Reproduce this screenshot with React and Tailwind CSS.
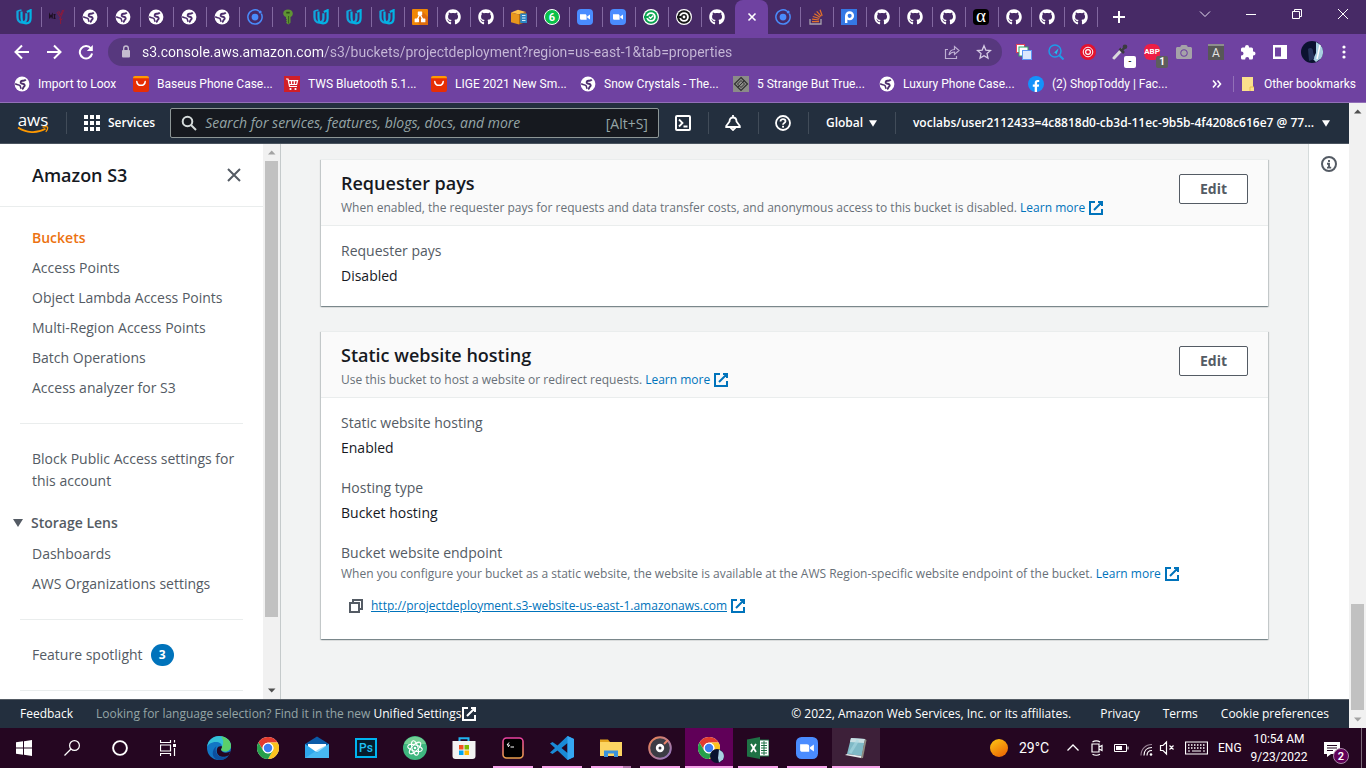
import React from "react";
import { FaGithub, FaFacebookF, FaCamera } from "react-icons/fa";

/* ---------- favicons ---------- */

const Svg = ({ s = 16, vb = "0 0 16 16", children, className = "" }) => (
  <svg width={s} height={s} viewBox={vb} fill="none" aria-hidden="true" className={"shrink-0 " + className}>
    {children}
  </svg>
);

const Udacity = () => (
  <Svg>
    <path d="M1.500 1.800v6.400c0 3 1.900 5.300 4.600 5.300 2.600 0 4.300-1.600 4.300-4.500V4.200" stroke="#12a5dc" strokeWidth="2.300" />
    <path d="M5.500 2.400v6.200c0 3.400 1.700 5.800 4.600 5.800 2.900 0 4.500-2.300 4.500-5.300V1.200l-3.800 1.700" stroke="#02b3e4" strokeWidth="2.200" />
    <path d="M1.500 2l4-1" stroke="#12a5dc" strokeWidth="1.600" />
  </Svg>
);

const Globe = () => (
  <Svg>
    <circle cx="8" cy="8" r="7.400" fill="#fff" />
    <path d="M11.800 3.600C10.500 5 9.600 4.600 8.300 4.800c-1.800.3-2.200 1.900-.9 2.600 1.200.6 3 .2 3.300 1.700.2 1.200-.9 1.400-1.300 2.300-.3.700-.5 1.300-1.300 1.900" stroke="#4c2d6d" strokeWidth="1.900" />
    <path d="M1.200 7.600c1.500 1.400 3.700.7 4.700 1.900.8 1 .4 1.900 1.300 3.200" stroke="#4c2d6d" strokeWidth="1.500" />
  </Svg>
);

const RedMark = () => (
  <Svg>
    <g stroke="#1d0f22" strokeWidth="1.200">
      <path d="M.6 9.500v-4l1.300 2.200 1.300-2.200v4M4.500 5.600h2M5.500 5.600v3.900M4.500 9.400h2" />
    </g>
    <path d="M8 3l3.500 5.500L15 .8M9.500 2l2.300 4 1.800-5M11.600 8v7M10 9.500l1.800 1.500 1.700-1.300" stroke="#8e1a3a" strokeWidth="1" />
  </Svg>
);

const Ionic = () => (
  <Svg>
    <path d="M12 2.100A7.100 7.100 0 1 0 14.300 4.700" stroke="#4a8bfa" strokeWidth="1.500" />
    <circle cx="8" cy="8.100" r="3.400" fill="#4a8bfa" />
    <circle cx="13.200" cy="3" r="1.500" fill="#4a8bfa" />
  </Svg>
);

const Key = () => (
  <Svg>
    <path d="M8 .5c2.700 0 4.800 1.500 4.800 4 0 1.700-.9 3-2.300 3.600v5.600L8.300 15.500l-2.300-1.800 1-1-1-1.100 1-1-1-.9V8.100C4.600 7.500 3.200 6.200 3.200 4.500c0-2.500 2.100-4 4.800-4z" fill="#5f9434" />
    <path d="M6.300 2.800h3.400v1.700H6.300z" fill="#2b4a19" />
    <path d="M8.600 7v7.500" stroke="#37611b" strokeWidth="1" />
  </Svg>
);

const Draw = () => (
  <Svg>
    <rect width="16" height="16" rx="1" fill="#f08705" />
    <path d="M11 3l5 5v8H8l-4-4z" fill="#df6c0c" />
    <path d="M8 5L5 11M8 5l3 6" stroke="#fff" strokeWidth="1.400" />
    <rect x="5.800" y="2.600" width="4.400" height="3.600" rx=".5" fill="#fff" />
    <rect x="2.600" y="9.600" width="4.400" height="3.600" rx=".5" fill="#fff" />
    <rect x="9" y="9.600" width="4.400" height="3.600" rx=".5" fill="#fff" />
  </Svg>
);

const Github = () => <FaGithub className="size-4 shrink-0 text-white" aria-hidden="true" />;

const Box = () => (
  <Svg>
    <path d="M0 3.500L7 .8l8 2.200-7 2.500z" fill="#ffc14a" />
    <path d="M0 3.500l8 2v10l-8-2.200z" fill="#e8971d" />
    <path d="M8 5.500l7-2.500v10l-7 2.500z" fill="#b86f10" />
    <rect x="9.200" y="4.500" width="6.800" height="9.500" fill="#2d84c4" />
    <path d="M11 6.500h3.500M11 9h3.500M11 11.500h3.500" stroke="#d9edfa" strokeWidth="1.200" />
  </Svg>
);

const WhatsApp = () => (
  <span className="flex size-4 shrink-0 items-center justify-center rounded-full border border-white bg-[#0ac14a] text-[11px] leading-none font-bold text-white">
    6
  </span>
);

const Zoom = ({ s = 16 }) => (
  <Svg s={s}>
    <rect width="16" height="16" rx="4" fill="#4a8cff" />
    <path d="M3 5.200h5c1 0 1.600.600 1.600 1.600v4h-5c-1 0-1.600-.6-1.600-1.600z" fill="#fff" />
    <path d="M10.200 7.400l2.800-2v5.200l-2.800-2z" fill="#fff" />
  </Svg>
);

const Circle = ({ c, check }) => (
  <Svg>
    <circle cx="8" cy="8" r="8" fill="#fff" />
    <circle cx="8" cy="8" r="6.800" fill={c} />
    <circle cx="8" cy="8" r="3.900" stroke="#fff" strokeWidth="1.900" />
    <path d="M1 8h4.500" stroke={c} strokeWidth="2.200" />
    {check ? <path d="M6 7.800l1.500 1.500L10.300 6.600" stroke="#fff" strokeWidth="1.400" /> : <circle cx="8" cy="8" r="1.400" fill="#fff" />}
  </Svg>
);

const PTab = () => (
  <Svg>
    <rect width="16" height="16" fill="#3578e5" />
    <circle cx="8.600" cy="6.800" r="3.300" stroke="#fff" strokeWidth="2.400" />
    <path d="M5.200 6.500v7.500" stroke="#fff" strokeWidth="2.400" />
  </Svg>
);

const Stack = () => (
  <Svg>
    <path d="M2 10v5h11v-5" stroke="#a9a3ad" strokeWidth="1.300" />
    <path d="M4 12.700h7M4.100 10.200l6.900.8M4.800 7.500l6.600 2M6.300 4.700l5.900 3.600M8.700 2.300l4.500 5M12 .8l2.200 6" stroke="#e3712b" strokeWidth="1.200" />
  </Svg>
);

const Alpha = () => (
  <span className="flex size-4 shrink-0 items-center justify-center rounded-sm bg-black pb-1 font-['Liberation_Serif',serif] text-[19px] leading-none text-white">
    α
  </span>
);

const Ali = () => (
  <Svg>
    <path d="M0 2a2 2 0 0 1 2-2h12a2 2 0 0 1 2 2v3H0z" fill="#ff9a00" />
    <path d="M0 2.200h16V14a2 2 0 0 1-2 2H2a2 2 0 0 1-2-2z" fill="#e62e04" />
    <path d="M3.800 5.600c.5 5 7.900 5 8.400 0" stroke="#fff" strokeWidth="1.500" strokeLinecap="round" />
  </Svg>
);

const Cart = () => (
  <Svg>
    <rect width="16" height="16" fill="#d11f27" />
    <path d="M2 3h2l1.500 7.500H13M4.600 4.700h9l-1 3.800H5.400M7.500 4.700v3.800M10.300 4.700v3.800" stroke="#fff" strokeWidth="1.200" />
    <circle cx="6.500" cy="13" r="1.100" fill="#fff" />
    <circle cx="11.500" cy="13" r="1.100" fill="#fff" />
  </Svg>
);

const Diamond = () => (
  <Svg>
    <rect width="16" height="16" fill="#8b8b88" />
    <path d="M8 1.500L14.500 8 8 14.500 1.500 8z" stroke="#303030" strokeWidth="1.200" />
    <path d="M8 4.500L11.500 8 8 11.500 4.500 8zM4.500 11.500l7-7" stroke="#303030" />
  </Svg>
);

const Facebook = () => (
  <span className="flex size-4 shrink-0 items-end justify-center rounded-full bg-[#1492fb] text-white">
    <FaFacebookF className="h-3 w-3" aria-hidden="true" />
  </span>
);

/* ---------- shared bits ---------- */

const External = () => (
  <svg viewBox="0 0 16 16" fill="none" stroke="currentColor" strokeWidth="2" aria-hidden="true" className="inline-block size-4 shrink-0 align-middle">
    <path d="M10 2h4v4M6 10l8-8M14 9.048V14H2V2h5" />
  </svg>
);

const Caret = ({ className = "" }) => (
  <svg viewBox="0 0 10 8" fill="currentColor" aria-hidden="true" className={"shrink-0 " + className}>
    <path d="M0 0h10L5 8z" />
  </svg>
);

function ScrollTrack({ up, down, thumb, lead }) {
  return (
    <div className="flex w-[17px] shrink-0 flex-col items-center bg-[#f1f1f1]">
      <Svg s={17} vb="0 0 17 17"><path d="M5 10.500h7.500L8.700 6.500z" fill={up} /></Svg>
      <div className={lead} />
      <div className={"w-[13px] bg-[#c1c1c1] " + thumb} />
      <div className="grow" />
      <Svg s={17} vb="0 0 17 17"><path d="M5 6.500h7.500L8.700 10.500z" fill={down} /></Svg>
    </div>
  );
}

/* ---------- browser chrome ---------- */

const tabsLeft = [
  ["Udacity", <Udacity />], ["MZ", <RedMark />], ["Site 1", <Globe />], ["Site 2", <Globe />], ["Site 3", <Globe />],
  ["Site 4", <Globe />], ["Site 5", <Globe />], ["Ionic", <Ionic />], ["Keys", <Key />], ["Udacity 2", <Udacity />],
  ["Udacity 3", <Udacity />], ["Udacity 4", <Udacity />], ["Diagrams", <Draw />], ["GitHub 1", <Github />],
  ["GitHub 2", <Github />], ["Packages", <Box />], ["WhatsApp", <WhatsApp />], ["Zoom 1", <Zoom />], ["Zoom 2", <Zoom />],
  ["CircleCI passed", <Circle c="#0aa350" check />], ["CircleCI", <Circle c="#161616" />], ["GitHub 3", <Github />],
];
const tabsRight = [
  ["Ionic 2", <Ionic />], ["Stack Overflow", <Stack />], ["P", <PTab />], ["GitHub 4", <Github />], ["GitHub 5", <Github />],
  ["GitHub 6", <Github />], ["Alpha", <Alpha />], ["GitHub 7", <Github />], ["GitHub 8", <Github />], ["GitHub 9", <Github />],
];

const Tab = ({ label, icon, bare }) => (
  <button aria-label={label} className="flex h-[34px] w-[33px] shrink-0 items-center pl-[7px]">
    {icon}
    {!bare && <span className="ml-auto h-5 w-px bg-[#8268a0]" />}
  </button>
);

function TabStrip() {
  const win = "flex h-7 w-[46px] items-center justify-center";
  return (
    <div className="flex h-[34px] shrink-0 items-center bg-[#472a66] pl-[9px]">
      {tabsLeft.map(([l, i], n) => <Tab key={l} label={l} icon={i} bare={n === tabsLeft.length - 1} />)}
      <button aria-label="Close tab" className="flex h-[34px] w-[33px] shrink-0 items-center justify-center rounded-t-lg bg-[#6f42a1]">
        <Svg><path d="M4.500 4.500l7 7M11.500 4.500l-7 7" stroke="#fff" strokeWidth="1.600" /></Svg>
      </button>
      {tabsRight.map(([l, i]) => <Tab key={l} label={l} icon={i} />)}
      <button aria-label="New tab" className="ml-[7px] flex size-7 items-center justify-center">
        <Svg><path d="M8 2v12M2 8h12" stroke="#fff" strokeWidth="2" /></Svg>
      </button>
      <div className="ml-auto flex self-start">
        <button aria-label="Search tabs" className={win}><Svg><path d="M3 5.500l5 5 5-5" stroke="#e6dff0" /></Svg></button>
        <button aria-label="Minimize" className={win}><Svg><path d="M3 8.500h10" stroke="#fff" /></Svg></button>
        <button aria-label="Restore" className={win}>
          <Svg><path d="M3.500 5.500h7v7h-7zM5.500 5.500v-2h7v7h-2" stroke="#fff" /></Svg>
        </button>
        <button aria-label="Close" className={win}><Svg><path d="M3 3l10 10M13 3L3 13" stroke="#fff" /></Svg></button>
      </div>
    </div>
  );
}

function AddressBar() {
  const b = "flex size-8 shrink-0 items-center justify-center text-white";
  return (
    <div className="flex h-9 shrink-0 items-center bg-[#6f42a1] px-[6px]">
      <button aria-label="Back" className={b}><Svg><path d="M15 8H2M8 1.500L1.500 8 8 14.500" stroke="#fff" strokeWidth="2" /></Svg></button>
      <button aria-label="Forward" className={b}><Svg><path d="M1 8h13M8 1.500L14.500 8 8 14.500" stroke="#fff" strokeWidth="2" /></Svg></button>
      <button aria-label="Reload" className={b}>
        <Svg><path d="M13 4.500A6.200 6.200 0 1 0 14.100 9.500" stroke="#fff" strokeWidth="2" /><path d="M14.800 1v6H8.800z" fill="#fff" /></Svg>
      </button>
      <div className="mx-[6px] flex h-7 min-w-0 grow items-center rounded-full bg-[#57387e] pr-[10px] pl-[10px]">
        <Svg><rect x="4" y="6" width="8" height="7.500" rx="1" fill="#c4bccf" /><path d="M5.700 6.500V4.300a2.300 2.300 0 0 1 4.600 0v2.200" stroke="#c4bccf" strokeWidth="1.400" /></Svg>
        <input
          aria-label="Address"
          defaultValue="s3.console.aws.amazon.com/s3/buckets/projectdeployment?region=us-east-1&tab=properties"
          className="ml-2 min-w-0 grow bg-[linear-gradient(90deg,#ffffff_182px,#c6b8d8_182px)] bg-clip-text text-[14px] leading-5 text-transparent outline-none"
        />
        <button aria-label="Share" className="ml-2">
          <Svg><path d="M4 5.500H1.500v9h11V12M5 11c.5-4 2.500-5.500 5.500-5.500V2.500L15 6.500l-4.500 4V8C8 8 6.500 8.800 5 11z" stroke="#bdaed2" strokeWidth="1.200" /></Svg>
        </button>
        <button aria-label="Bookmark this page" className="ml-4">
          <Svg><path d="M8 1.800l1.800 4.300 4.700.4-3.500 3.100 1 4.500L8 11.700l-4 2.400 1-4.500-3.500-3.100 4.700-.4z" stroke="#d6cbe4" strokeWidth="1.300" /></Svg>
        </button>
      </div>
      <button aria-label="Tab groups" className={b}>
        <Svg>
          <rect x=".5" y=".5" width="8" height="8" fill="#fff" stroke="#e2435c" />
          <rect x="3" y="3" width="9" height="9" fill="#fff" stroke="#2fa866" />
          <rect x="6.500" y="6.500" width="9" height="9" fill="#dce8fd" stroke="#5f98f4" />
        </Svg>
      </button>
      <button aria-label="Search inspector" className={b}>
        <Svg><circle cx="7" cy="7" r="6" stroke="#1e9be8" strokeWidth="1.500" /><path d="M11.500 11.500l4 4" stroke="#1e9be8" strokeWidth="2" /><path d="M4 10.500l6.500-6-2 6-1.800-2z" fill="#1ec3f0" /></Svg>
      </button>
      <button aria-label="Target" className={b}>
        <Svg><circle cx="8" cy="8" r="8" fill="#e4122d" /><circle cx="8" cy="8" r="4.800" stroke="#fff" /><circle cx="8" cy="8" r="2.400" stroke="#fff" strokeWidth="1.200" /></Svg>
      </button>
      <button aria-label="Color picker" className={b + " relative"}>
        <Svg>
          <path d="M2 14l7.500-8" stroke="#d9d9dc" strokeWidth="3" strokeLinecap="round" />
          <path d="M7.500 4.500l4.500 4.500M10 6.500l3-3.500" stroke="#3b3b40" strokeWidth="2.600" />
          <circle cx="13" cy="2.800" r="2.300" fill="#3b3b40" />
        </Svg>
        <span className="absolute right-0 bottom-0 flex size-3 items-center justify-center rounded-xs bg-white text-[10px] leading-none text-black">-</span>
      </button>
      <button aria-label="Ad blocker" className={b + " relative"}>
        <span className="flex size-4 items-center justify-center rounded-md bg-[#ed1e45] text-[8px] font-bold">ABP</span>
        <span className="absolute right-0 bottom-0 flex size-3 items-center justify-center rounded-xs bg-[#5d5d5d] text-[10px] leading-none font-bold">1</span>
      </button>
      <button aria-label="Screenshot" className={b}><FaCamera className="size-4 text-[#a5a3a8]" aria-hidden="true" /></button>
      <button aria-label="Fonts" className={b}>
        <span className="flex size-4 items-center justify-center border-t-2 border-[#8d8d8d] bg-[#575757] text-[12px] leading-none text-[#e3e3e3]">A</span>
      </button>
      <button aria-label="Extensions" className={b}>
        <Svg><path d="M1 5a1.500 1.500 0 0 1 1.500-1.500H5V3a2 2 0 0 1 4 0v.5h2.500A1.500 1.500 0 0 1 13 5v2.500h.5a2 2 0 0 1 0 4H13V14a1.500 1.500 0 0 1-1.500 1.500H9.200V15a2 2 0 0 0-4 0v.5H2.500A1.500 1.500 0 0 1 1 14v-2.500h.5a2 2 0 0 0 0-4H1z" fill="#fff" /></Svg>
      </button>
      <button aria-label="Side panel" className={b}><Svg><path d="M1 1h14v14H1zM3 3.500v9h6v-9z" fill="#fff" fillRule="evenodd" /></Svg></button>
      <button aria-label="Profile" className={b}>
        <Svg s={22} vb="0 0 22 22">
          <circle cx="11" cy="11" r="11" fill="#0b1230" />
          <path d="M15 1l4 2.500a11 11 0 0 1 1 14L15 21l-3-3 3-6z" fill="#a9cfe2" />
          <path d="M19 4l-3 14" stroke="#fff" strokeWidth="1.500" />
          <path d="M7 8c2-2 5-1 5 2s2 4 1 8l-5 2z" fill="#26345c" />
        </Svg>
      </button>
      <button aria-label="Menu" className={b}><Svg><g fill="#fff"><circle cx="8" cy="3" r="1.600" /><circle cx="8" cy="8" r="1.600" /><circle cx="8" cy="13" r="1.600" /></g></Svg></button>
    </div>
  );
}

const bookmarks = [
  ["Import to Loox", <Globe />, "w-[119px]"],
  ["Baseus Phone Case...", <Ali />, "w-[151px]"],
  ["TWS Bluetooth 5.1...", <Cart />, "w-[147px]"],
  ["LIGE 2021 New Sm...", <Ali />, "w-[149px]"],
  ["Snow Crystals - The...", <Globe />, "w-[153px]"],
  ["5 Strange But True...", <Diamond />, "w-[146px]"],
  ["Luxury Phone Case...", <Globe />, "w-[149px]"],
  ["(2) ShopToddy | Fac...", <Facebook />, "w-[153px]"],
];

function BookmarkBar() {
  return (
    <nav aria-label="Bookmarks" className="flex h-[33px] shrink-0 items-center border-b border-[#9270b8] bg-[#6f42a1] pr-[10px] pb-1 pl-[14px] text-[12px] leading-4 whitespace-nowrap text-white">
      {bookmarks.map(([t, i, w]) => (
        <a key={t} href="#bookmark" className={"flex shrink-0 items-center gap-2 " + w}>{i}{t}</a>
      ))}
      <button aria-label="More bookmarks" className="ml-auto">
        <Svg><path d="M4 4.500L7 8l-3 3.500M8.500 4.500l3 3.500-3 3.500" stroke="#fff" strokeWidth="1.600" /></Svg>
      </button>
      <span className="mr-1.5 ml-2 h-4 w-px bg-[#9270b8]" />
      <button className="flex items-center gap-2">
        <Svg><path d="M2 1h11v10h1v4H2z" fill="#fbe08c" /><path d="M10 15v-4h4" stroke="#e8c04e" /></Svg>
        Other bookmarks
      </button>
    </nav>
  );
}

/* ---------- AWS console ---------- */

function ConsoleNav() {
  const sep = <span className="h-[22px] w-px shrink-0 bg-[#414c59]" />;
  const ib = "flex h-10 w-[49px] shrink-0 items-center justify-center text-white";
  return (
    <header className="flex h-[41px] shrink-0 items-center border-b border-[#4a545f] bg-[#232f3e] text-[12px] font-semibold text-white">
      <a href="#home" aria-label="AWS home" className="flex w-[66px] shrink-0 flex-col items-center">
        <span className="text-[17px] leading-[13px] font-medium">aws</span>
        <svg width="32" height="8" viewBox="0 0 32 8" fill="none" aria-hidden="true">
          <path d="M1 1.500c8 5.500 19 6.200 27.500 1.300" stroke="#ff9900" strokeWidth="1.700" />
          <path d="M25.500 1.200c2-.5 4.500-.8 5 0 .4.800-.6 3.200-1.700 4.600" stroke="#ff9900" strokeWidth="1.300" />
        </svg>
      </a>
      {sep}
      <button className="ml-[17px] flex items-center gap-2">
        <Svg>
          <g fill="#fff">
            {[0, 6, 12].map((y) => [0, 6, 12].map((x) => <rect key={x + "-" + y} x={x} y={y} width="4" height="4" />))}
          </g>
        </Svg>
        Services
      </button>
      <div className="ml-[15px] flex h-[30px] min-w-0 grow items-center rounded-xs border border-[#8d9696] bg-[#16191f] px-[10px]">
        <Svg><circle cx="6.500" cy="6.500" r="4.800" stroke="#d5dbdb" strokeWidth="2" /><path d="M10 10l5 5" stroke="#d5dbdb" strokeWidth="2" /></Svg>
        <input
          aria-label="Search"
          placeholder="Search for services, features, blogs, docs, and more"
          className="ml-2 min-w-0 grow text-[14px] leading-5 font-normal outline-none placeholder:text-[#95a5a6] placeholder:italic"
        />
        <span className="text-[14px] font-normal text-[#95a5a6]">[Alt+S]</span>
      </div>
      <button aria-label="CloudShell" className={ib}>
        <Svg><rect x="1" y="1" width="14" height="14" rx="1" stroke="#fff" strokeWidth="2" /><path d="M4 4.500L7.500 8 4 11.500M8.500 11.500h4" stroke="#fff" strokeWidth="1.800" /></Svg>
      </button>
      {sep}
      <button aria-label="Notifications" className={ib}>
        <Svg><path d="M8 0v2.500M8 2.500c2.300 0 3.500 1.700 3.500 4L14.800 11v1H1.200v-1l3.300-4.500c0-2.300 1.200-4 3.500-4z" stroke="#fff" strokeWidth="1.800" /><path d="M5.500 12.500L8 15l2.500-2.500" stroke="#fff" strokeWidth="1.800" /></Svg>
      </button>
      {sep}
      <button aria-label="Help" className={ib}>
        <Svg><circle cx="8" cy="8" r="7" stroke="#fff" strokeWidth="1.800" /><path d="M5.500 6.500c0-3.200 5-3 5-.2 0 1.700-2.500 1.700-2.500 3.400" stroke="#fff" strokeWidth="1.800" /><rect x="7.100" y="10.800" width="1.900" height="1.800" fill="#fff" /></Svg>
      </button>
      {sep}
      <button className="flex h-10 w-[86px] shrink-0 items-center gap-1.5 pl-[17px]">Global <Caret className="h-[7px] w-2" /></button>
      {sep}
      <button className="flex h-10 shrink-0 items-center gap-2 pr-[19px] pl-[17px] whitespace-nowrap">
        voclabs/user2112433=4c8818d0-cb3d-11ec-9b5b-4f4208c616e7 @ 77... <Caret className="h-[7px] w-2" />
      </button>
    </header>
  );
}

const primary = ["Buckets", "Access Points", "Object Lambda Access Points", "Multi-Region Access Points", "Batch Operations", "Access analyzer for S3"];

function SideNav() {
  const rule = <hr className="my-6 mr-5 ml-5 border-t border-[#eaeded]" />;
  return (
    <aside className="flex min-h-0 shrink-0 border-r border-[#c5cacb] bg-white">
      <div className="w-[263px] overflow-hidden text-[14px] leading-[22px] text-[#545b64]">
        <div className="flex h-[63px] items-center justify-between border-b border-[#eaeded] pr-[21px] pl-8">
          <h2 className="text-[18px] font-semibold text-[#16191f]">Amazon S3</h2>
          <button aria-label="Close navigation"><Svg><path d="M2 2l12 12M14 2L2 14" stroke="#545b64" strokeWidth="2" /></Svg></button>
        </div>
        <ul className="mt-5 flex flex-col gap-2 pl-8">
          {primary.map((t, i) => (
            <li key={t}><a href="#nav" className={i === 0 ? "font-semibold text-[#ec7211]" : ""}>{t}</a></li>
          ))}
        </ul>
        {rule}
        <a href="#block" className="block pr-5 pl-8">Block Public Access settings for this account</a>
        <button className="mt-5 flex items-center gap-2 pl-[13px] font-semibold"><Caret className="h-2 w-2.5" />Storage Lens</button>
        <ul className="mt-[9px] flex flex-col gap-2 pl-8">
          <li><a href="#dashboards">Dashboards</a></li>
          <li><a href="#org">AWS Organizations settings</a></li>
        </ul>
        {rule}
        <a href="#spotlight" className="flex items-center gap-2 pl-8">
          Feature spotlight
          <span className="flex h-[22px] w-[23px] items-center justify-center rounded-full bg-[#0073bb] text-[12px] font-bold text-white">3</span>
        </a>
        {rule}
      </div>
      <ScrollTrack up="#a3a3a3" down="#505050" lead="" thumb="h-[456px]" />
    </aside>
  );
}

const Learn = () => (
  <a href="#learn" className="inline-flex items-center gap-[3px] text-[#0073bb]">Learn more <External /></a>
);

function Card({ title, desc, children }) {
  return (
    <section className="border-t border-[#eaeded] bg-white shadow-[0_1px_1px_0_rgba(0,28,36,0.3),1px_1px_1px_0_rgba(0,28,36,0.15),-1px_1px_1px_0_rgba(0,28,36,0.15)]">
      <div className="flex items-start justify-between border-b border-[#eaeded] bg-[#fafafa] px-5 pt-3 pb-2">
        <div>
          <h2 className="text-[18px] leading-[22px] font-semibold text-[#16191f]">{title}</h2>
          <p className="mt-[5px] text-[12px] leading-[18px] text-[#687078]">{desc} <Learn /></p>
        </div>
        <button className="mt-0.5 h-[30px] rounded-xs border border-[#545b64] bg-white px-5 text-[14px] leading-5 font-bold text-[#545b64]">Edit</button>
      </div>
      <dl className="flex flex-col gap-[18px] px-5 pt-[14px] pb-[19px] text-[14px] leading-[22px] text-[#16191f]">{children}</dl>
    </section>
  );
}

const Field = ({ label, children }) => (
  <div>
    <dt className="text-[#545b64]">{label}</dt>
    <dd className="mt-[3px]">{children}</dd>
  </div>
);

function Content() {
  return (
    <main className="flex min-w-0 grow flex-col gap-[25px] overflow-hidden bg-[#f2f3f3] px-10 pt-[15px]">
      <Card title="Requester pays" desc="When enabled, the requester pays for requests and data transfer costs, and anonymous access to this bucket is disabled.">
        <Field label="Requester pays">Disabled</Field>
      </Card>
      <Card title="Static website hosting" desc="Use this bucket to host a website or redirect requests.">
        <Field label="Static website hosting">Enabled</Field>
        <Field label="Hosting type">Bucket hosting</Field>
        <div>
          <dt className="text-[#545b64]">Bucket website endpoint</dt>
          <dd className="mt-px text-[12px] leading-[18px]">
            <p className="text-[#687078]">When you configure your bucket as a static website, the website is available at the AWS Region-specific website endpoint of the bucket. <Learn /></p>
            <div className="mt-2 flex h-[29px] items-center gap-[7px] pl-[7px]">
              <button aria-label="Copy endpoint">
                <Svg><path d="M2 5h9v9H2zM5 5V2h9v9h-3" stroke="#545b64" strokeWidth="2" /></Svg>
              </button>
              <a href="#endpoint" className="flex items-center gap-[3px] text-[#0073bb] underline">
                http://projectdeployment.s3-website-us-east-1.amazonaws.com <External />
              </a>
            </div>
          </dd>
        </div>
      </Card>
    </main>
  );
}

function Footer() {
  return (
    <footer className="flex h-[29px] shrink-0 items-center border-t border-[#545b64] bg-[#232f3e] pr-5 pl-5 text-[12px] leading-4 font-medium whitespace-nowrap text-white">
      <a href="#feedback">Feedback</a>
      <p className="ml-[23px] font-normal text-[#95a5a6]">
        Looking for language selection? Find it in the new{" "}
        <a href="#settings" className="inline-flex items-center font-medium text-white">Unified Settings<External /></a>
      </p>
      <span className="ml-auto">© 2022, Amazon Web Services, Inc. or its affiliates.</span>
      <a href="#privacy" className="ml-[29px]">Privacy</a>
      <a href="#terms" className="ml-[23px]">Terms</a>
      <a href="#cookies" className="ml-[23px]">Cookie preferences</a>
    </footer>
  );
}

/* ---------- taskbar ---------- */

const ChromeLogo = ({ s = 22 }) => (
  <Svg s={s} vb="0 0 24 24">
    <circle cx="12" cy="12" r="12" fill="#fff" />
    <path d="M1.600 6A12 12 0 0 1 22.400 6H12a6 6 0 0 0-5.200 9z" fill="#e33b2e" />
    <path d="M22.400 6A12 12 0 0 1 12 24l5.200-9A6 6 0 0 0 12 6z" fill="#fcc31e" />
    <path d="M12 24A12 12 0 0 1 1.600 6l5.200 9a6 6 0 0 0 10.400 0z" fill="#27a04b" />
    <circle cx="12" cy="12" r="5.800" fill="#fff" />
    <circle cx="12" cy="12" r="4.600" fill="#3d7df0" />
  </Svg>
);

const Edge = () => (
  <Svg s={24} vb="0 0 24 24">
    <circle cx="12" cy="12" r="12" fill="#1276c4" />
    <path d="M0 11C1 4 6 0 12 0c7 0 12 4.500 12 9.500 0 4-3 6-6 6-2.500 0-4-1-4-2 0-.8 1-1.200 1-3 0-2.500-2.500-4.500-6-4.500-5 0-8 2.500-9 5z" fill="#35c1d8" />
    <path d="M14 .2c6 .8 10 5 10 9.300 0 4-3 6-6 6-2.500 0-4-1-4-2 0-.8 1-1.200 1-3 2-3 1.500-7-1-10.300z" fill="#5bd06a" />
    <path d="M9.500 10c-2 3.500-.5 9.500 5 11 3 .8 6-.5 7.500-2-2 4-6.500 5.500-10.500 5C5 23 3.500 15 9.500 10z" fill="#0c4f9e" />
    <path d="M14 13.500c0 3 6 4.500 9.500 1.500l-1.500 4c-2 1.600-5 2.200-8 1.500-4-1-5.500-6-3-9.500 1-1 3-1 4-.5 0 1.800-1 2.200-1 3z" fill="#250621" />
  </Svg>
);

const apps = [
  ["Edge", <Edge />, ""],
  ["Chrome", <ChromeLogo />, ""],
  ["Mail", <Svg s={24} vb="0 0 24 24"><path d="M0 8l12-7.500L24 8v4H0z" fill="#0a5ba8" /><path d="M3 8h18v8H3z" fill="#fff" /><path d="M0 8l12 8.500L24 8v14H0z" fill="#2ea7ec" /><path d="M0 22L14 13 24 8v14z" fill="#58c3f7" opacity=".6" /></Svg>, ""],
  ["Photoshop", <span className="flex h-5 w-[22px] items-center justify-center border-2 border-[#00b4f0] bg-[#051c2c] text-[12px] leading-none font-medium text-[#1fc0f5]">Ps</span>, ""],
  ["Atom", <Svg s={24} vb="0 0 24 24"><circle cx="12" cy="12" r="12" fill="#3fb67f" /><path d="M1 8a12 12 0 0 1 22 0z" fill="#72cf95" /><g stroke="#fff"><ellipse cx="12" cy="12" rx="7.500" ry="3" transform="rotate(15 12 12)" /><ellipse cx="12" cy="12" rx="7.500" ry="3" transform="rotate(75 12 12)" /><ellipse cx="12" cy="12" rx="7.500" ry="3" transform="rotate(135 12 12)" /></g><circle cx="12" cy="12" r="1.300" fill="#fff" /></Svg>, ""],
  ["Store", <Svg s={24} vb="0 0 24 24"><path d="M7.500 6V2.200h9V6" stroke="#20b4f0" strokeWidth="2" /><path d="M.5 5h23v15a3 3 0 0 1-3 3h-17a3 3 0 0 1-3-3z" fill="#f2f2f2" /><path d="M7 9h4.500v4.500H7z" fill="#f25022" /><path d="M12.500 9H17v4.500h-4.500z" fill="#7fba00" /><path d="M7 14.500h4.500V19H7z" fill="#00a4ef" /><path d="M12.500 14.500H17V19h-4.500z" fill="#ffb900" /></Svg>, ""],
  ["Terminal", <Svg s={22} vb="0 0 22 22"><defs><linearGradient id="term" x1="0" y1="0" x2="0" y2="1"><stop stopColor="#e83fa0" /><stop offset="1" stopColor="#e8a04a" /></linearGradient></defs><rect x="1" y="1" width="20" height="20" rx="3.500" fill="#000" stroke="url(#term)" strokeWidth="1.600" /><path d="M7 5.500L5 8h2.500L6 10M8.500 10h3.500" stroke="#fff" /></Svg>, "u"],
  ["VS Code", <Svg s={24} vb="0 0 24 24"><path d="M17.500 0L24 3v18l-6.500 3L7.500 14.500 2.500 18 0 16.500 5 12 0 7.500 2.500 6l5 3.500zM17.500 7L11.500 12l6 5z" fill="#1a8ad6" fillRule="evenodd" /><path d="M17.500 0L24 3v18l-6.500 3z" fill="#35a6f2" /></Svg>, "u"],
  ["File Explorer", <Svg s={22} vb="0 0 22 22"><path d="M0 2.500h8l2 2.500h12v4H0z" fill="#e2a21c" /><path d="M0 5h22v14H0z" fill="#fcd462" /><path d="M4 20v-6.500h14V20h-4v-3.500H8V20z" fill="#3c92dc" /></Svg>, "s"],
  ["Music", <Svg s={24} vb="0 0 24 24"><defs><linearGradient id="disc" x1="0" y1="0" x2="1" y2="1"><stop stopColor="#ee8250" /><stop offset="1" stopColor="#8a76c8" /></linearGradient></defs><circle cx="12" cy="12" r="10.800" fill="#3c3c44" stroke="url(#disc)" strokeWidth="2" /><path d="M20 4L16 8" stroke="#e8826a" strokeWidth="2" /><circle cx="12" cy="12" r="4.200" fill="#fff" /><circle cx="12" cy="12" r="1.500" fill="#3c3c44" /></Svg>, "u"],
  ["Chrome window", <span className="relative flex"><ChromeLogo /><span className="absolute -right-1 -bottom-1"><Svg s={14} vb="0 0 14 14"><circle cx="7" cy="7" r="7" fill="#0b1230" /><path d="M9 .5l3.500 2.500a7 7 0 0 1 .5 7.500L9 13.500 8 9z" fill="#a9cfe2" /></Svg></span></span>, "a"],
  ["Excel", <Svg s={22} vb="0 0 22 22"><path d="M12 3h10v16H12z" fill="#fff" stroke="#1e7145" /><path d="M14 6h6M14 8.500h6M14 11h6M14 13.500h6M14 16h6M17 4v14" stroke="#1e7145" /><path d="M0 2.500L13 0v22L0 19.500z" fill="#1e7145" /><path d="M4 7l5 8M9 7l-5 8" stroke="#fff" strokeWidth="1.800" /></Svg>, "u"],
  ["Zoom", <Zoom s={22} />, "u"],
  ["Notepad", <Svg s={24} vb="0 0 24 24"><path d="M7 2l14 1-3 17-15-2z" fill="#7fb9c6" /><path d="M7 2l14 1-1 4-14-1z" fill="#c9dfe2" /><path d="M3 18l15 2-1 2L1 19z" fill="#e9eef0" /><path d="M21 3l1.500 1-3.500 18-2 .2z" fill="#8f8a80" /><path d="M14 4L6 17" stroke="#a9d8e2" strokeWidth="3" opacity=".6" /></Svg>, "n"],
];

const appBg = { "": "", u: "", s: "", a: "bg-[#600058]", n: "bg-[#3d2039]" };
const appBar = { "": "", u: "w-10 bg-[#f6a3ea]", s: "w-10 border-r-8 border-[#b577ae] bg-[#f6a3ea]", a: "w-full bg-[#f6a3ea]", n: "w-full bg-[#f6a3ea]" };

function Taskbar() {
  const sys = "flex h-10 w-12 shrink-0 items-center justify-center";
  return (
    <div className="flex h-10 shrink-0 items-center bg-[#250621] text-white">
      <button aria-label="Start" className={sys}><Svg><path d="M0 2.300l7-1v6.200H0zM8 1.200L16 0v7.500H8zM0 8.500h7v6.200l-7-1zM8 8.500h8V16l-8-1.200z" fill="#fff" /></Svg></button>
      <button aria-label="Search" className={sys}><Svg><circle cx="10.500" cy="5.500" r="4.900" stroke="#fff" strokeWidth="1.200" /><path d="M7 9L.5 15.500" stroke="#fff" strokeWidth="1.200" /></Svg></button>
      <button aria-label="Cortana" className={sys}><Svg><circle cx="8" cy="8" r="6.900" stroke="#fff" strokeWidth="1.900" /></Svg></button>
      <button aria-label="Task view" className={sys}><Svg><path d="M.5 0v2.500h10V0M.5 16v-2.500h10V16M.5 5h10v6H.5zM14.500 0v2.500M14.500 8v8" stroke="#fff" strokeWidth="1.200" /><rect x="13" y="4" width="3" height="3" fill="#fff" /></Svg></button>
      <div className="ml-[3px] flex gap-px">
        {apps.map(([l, icon, st]) => (
          <button key={l} aria-label={l} className={"flex h-10 w-12 flex-col items-center " + appBg[st]}>
            <span className="flex h-[38px] items-center pt-0.5">{icon}</span>
            <span className={"h-0.5 " + appBar[st]} />
          </button>
        ))}
      </div>
      <div className="ml-auto flex items-center">
        <Svg s={18} vb="0 0 18 18"><defs><linearGradient id="sun" x1="0" y1="0" x2=".6" y2="1"><stop stopColor="#ffc915" /><stop offset="1" stopColor="#ec6d05" /></linearGradient></defs><circle cx="9" cy="9" r="9" fill="url(#sun)" /></Svg>
        <span className="ml-[11px] w-[46px] text-[14px]">29°C</span>
        <button aria-label="Show hidden icons"><Svg><path d="M2.500 10.500L8 5l5.500 5.500" stroke="#fff" strokeWidth="1.300" /></Svg></button>
        <Svg className="ml-2"><path d="M3 4h7v8H3zM10 7l3-1.500v5L10 9M3.500 2C5.500.5 9 .5 11 2M3.500 14.200c2 1.300 5.500 1.300 7.500 0" stroke="#fff" strokeWidth="1.200" /></Svg>
        <Svg className="ml-2"><path d="M1.500 4.500h12v7h-12zM15 6.500v3" stroke="#fff" /><rect x="3" y="6" width="6" height="4" fill="#fff" /></Svg>
        <Svg className="ml-2.5"><path d="M2 15.500C2 9 6.500 4.500 13 4.500" stroke="#998395" strokeWidth="1.100" /><path d="M5 15.500c0-5 3-8 8-8M8 15.500c0-3 2-5 5-5" stroke="#fff" strokeWidth="1.200" /><circle cx="12" cy="14.500" r="1.300" fill="#fff" /></Svg>
        <Svg className="ml-1"><path d="M1.500 5.500H4L7.500 2v12L4 10.500H1.500zM10.500 5.500l4 4M14.500 5.500l-4 4" stroke="#fff" strokeWidth="1.200" /></Svg>
        <svg width="23" height="14" viewBox="0 0 23 14" fill="none" aria-hidden="true" className="ml-2.5 shrink-0"><path d="M.5 1h22v12H.5z" stroke="#fff" strokeWidth="1.200" /><path d="M3 4h17M3 7h17" stroke="#fff" strokeWidth="1.300" strokeDasharray="1.500 1.500" /><path d="M3 10h2M7 10h9M18 10h2" stroke="#fff" /></svg>
        <span className="ml-2.5 w-[27px] text-[12px]">ENG</span>
        <div className="w-[68px] text-center text-[12px] leading-[18px]">
          <div>10:54 AM</div>
          <div>9/23/2022</div>
        </div>
        <button aria-label="Notifications" className="relative mr-3 ml-2.5 h-8 w-[26px]">
          <Svg s={20} vb="0 0 20 20"><path d="M1 5h16v12H8l-4 3v-3H1z" fill="#fff" transform="translate(0 -1)" /><path d="M4 7.500h10M4 10h10M4 12.500h6" stroke="#250621" strokeWidth="1.200" /></Svg>
          <span className="absolute right-0 bottom-0 flex size-4 items-center justify-center rounded-full border border-[#a88aa6] bg-[#600058] text-[11px] leading-none font-semibold">2</span>
        </button>
        <span className="mr-1 h-10 w-px bg-[#7b6a79]" />
      </div>
    </div>
  );
}

export default function App() {
  return (
    <div className="flex h-screen flex-col overflow-hidden font-['Roboto','Noto_Sans',sans-serif]">
      <TabStrip />
      <AddressBar />
      <BookmarkBar />
      <div className="flex min-h-0 grow">
        <div className="flex min-w-0 grow flex-col font-['Open_Sans','Noto_Sans',sans-serif]">
          <ConsoleNav />
          <div className="flex min-h-0 grow">
            <SideNav />
            <Content />
            <aside className="flex w-[41px] shrink-0 justify-center border-l border-[#d5dbdb] bg-white pt-3">
              <button aria-label="Info panel" className="size-4">
                <Svg><circle cx="8" cy="8" r="7" stroke="#545b64" strokeWidth="2" /><path d="M8 4v2M6 7.800h2v3.700M6 11.600h4.200" stroke="#545b64" strokeWidth="1.900" /></Svg>
              </button>
            </aside>
          </div>
          <Footer />
        </div>
        <ScrollTrack up="#505050" down="#a3a3a3" lead="grow-[500]" thumb="h-[106px]" />
      </div>
      <Taskbar />
    </div>
  );
}
